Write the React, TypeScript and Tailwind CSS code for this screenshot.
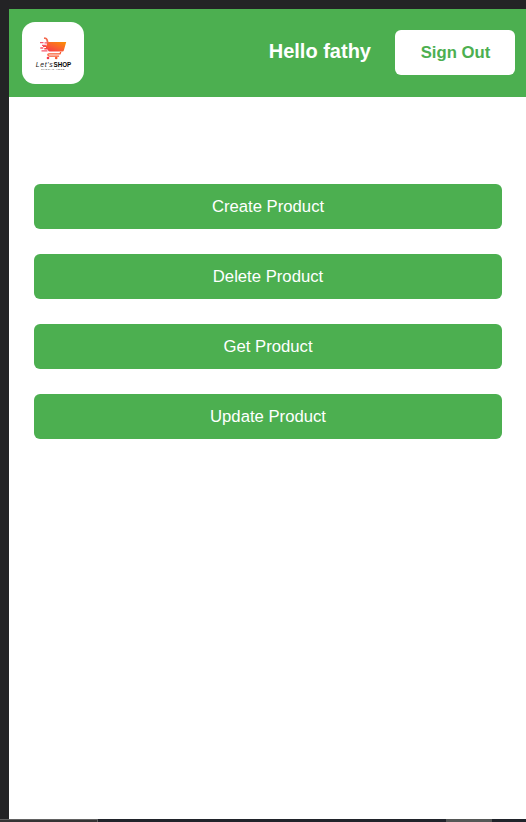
const actions = ["Create Product", "Delete Product", "Get Product", "Update Product"];

function Logo() {
  return (
    <svg viewBox="0 0 62 62" className="h-[62px] w-[62px] rounded-[13px] bg-white" aria-label="Let's Shop">
      <defs>
        <linearGradient id="cart" x1="0" y1="1" x2="1" y2="0">
          <stop offset="0" stopColor="#f52f4f" />
          <stop offset="0.5" stopColor="#fa6130" />
          <stop offset="1" stopColor="#fb9000" />
        </linearGradient>
      </defs>
      <path d="M25 20h19.2l-2.3 8.2q-.3 1.2-1.5 1.2H27.6q-1.2 0-1.6-1.2l-.5-.7h-3.2v-1.5h1.7v-1h-3v-1.5h3.6z" fill="url(#cart)" />
      <path d="M22.8 16.2q1.8 0 2.3 1.9l.6 2.5" fill="none" stroke="#f26a50" strokeWidth="1.8" strokeLinecap="round" />
      <path d="M18 20.7h3.5M22.5 20.8h3M20 23.3h4M18.3 26h3M19.5 28.8h6" stroke="#f6556b" strokeWidth="1.3" />
      <path d="M38.8 30l-.8 1.8H27.5q-1.8 0-1.6 1.2.2 1.2 1.8 1.2h9.4" fill="none" stroke="#f9592e" strokeWidth="1.3" />
      <circle cx="26" cy="36" r="1.3" fill="#f3364f" />
      <circle cx="34.2" cy="36" r="1.3" fill="#f9592e" />
      <text x="13.7" y="44.8" textLength="17" fontFamily="Liberation Sans, sans-serif" fontStyle="italic" fontSize="6.8" fill="#151515">Let's</text>
      <text x="31.5" y="44.8" textLength="17.7" lengthAdjust="spacingAndGlyphs" fontFamily="Liberation Sans, sans-serif" fontWeight="700" fontSize="6.8" fill="#050505">SHOP</text>
      <text x="19" y="48.3" textLength="23.5" fontFamily="Liberation Sans, sans-serif" fontSize="2.5" fill="#444">SLOGAN HERE</text>
    </svg>
  );
}

export default function App() {
  return (
    <div className="flex h-[822px] w-[526px] flex-col overflow-hidden bg-[#232325] pt-[9px] font-['Liberation_Sans',Arial,sans-serif]">
      <div className="ml-[9px] flex-1 bg-white">
        <header className="flex h-[88px] items-start justify-between bg-[#4caf50] pt-[13px] pr-[11px] pl-[13px]">
          <Logo />
          <div className="flex items-start gap-6 pt-2">
            <span className="mt-[6px] text-[20px] leading-[30px] font-bold text-white">Hello fathy</span>
            <button className="h-[45px] w-[120px] rounded-[6px] bg-white pt-px pl-px text-[16.7px] font-bold text-[#4caf50]">Sign Out</button>
          </div>
        </header>
        <main className="flex flex-col gap-[25px] pt-[87px] pr-[24px] pl-[25px]">
          {actions.map((label) => (
            <button key={label} className="h-[45px] w-full rounded-[6px] bg-[#4caf50] text-[16.7px] text-white">
              {label}
            </button>
          ))}
        </main>
      </div>
      <footer className="flex h-[3px] shrink-0 bg-[#20232a]">
        <div className="h-full w-[98px] border-t border-r border-[#626262] bg-[#343434]" />
        <div className="ml-[348px] h-full w-[46px] bg-[#555756]" />
      </footer>
    </div>
  );
}
